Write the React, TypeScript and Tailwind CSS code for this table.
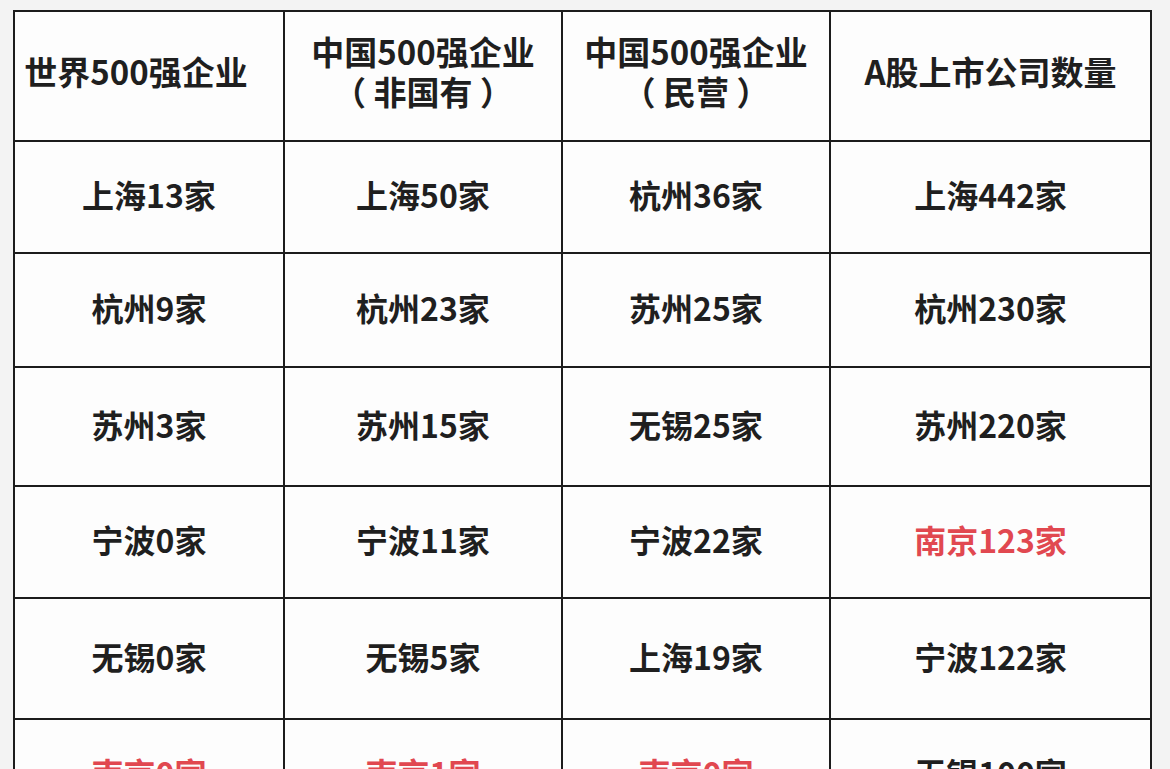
import React from "react";

type Cell = { t: string; red?: boolean };

const header: { lines: string[]; cls: string }[] = [
  { lines: ["世界500强企业"], cls: "pr-[26px] pb-[10px]" },
  { lines: ["中国500强企业", "（ 非国有 ）"], cls: "pb-[10px]" },
  { lines: ["中国500强企业", "（ 民营 ）"], cls: "pb-[10px]" },
  { lines: ["A股上市公司数量"], cls: "pb-[10px]" },
];

const rows: Cell[][] = [
  [{ t: "上海13家" }, { t: "上海50家" }, { t: "杭州36家" }, { t: "上海442家" }],
  [{ t: "杭州9家" }, { t: "杭州23家" }, { t: "苏州25家" }, { t: "杭州230家" }],
  [{ t: "苏州3家" }, { t: "苏州15家" }, { t: "无锡25家" }, { t: "苏州220家" }],
  [{ t: "宁波0家" }, { t: "宁波11家" }, { t: "宁波22家" }, { t: "南京123家", red: true }],
  [{ t: "无锡0家" }, { t: "无锡5家" }, { t: "上海19家" }, { t: "宁波122家" }],
  [{ t: "南京0家", red: true }, { t: "南京1家", red: true }, { t: "南京0家", red: true }, { t: "无锡100家" }],
];

const rowHeights = ["h-[110px]", "h-[112px]", "h-[117px]", "h-[110px]", "h-[119px]", "h-[110px]"];

export default function App() {
  return (
    <div
      className="w-[1170px] h-[769px] overflow-hidden bg-[#f3f3f3]"
      style={{ fontFamily: '"Noto Sans CJK SC", "Noto Sans", sans-serif' }}
    >
      <div className="ml-[13px] mt-[10px] w-[1139px] grid grid-cols-[268px_276px_266px_319px] gap-[2px] p-[2px] bg-[#1c1c1c]">
        {header.map((h, i) => (
          <div
            key={i}
            className={`h-[128px] bg-[#fdfdfd] flex flex-col items-center justify-center text-[33px] font-bold leading-[40px] text-[#1f1f1f] ${h.cls}`}
          >
            {h.lines.map((l, j) => (
              <span key={j} className="whitespace-pre">
                {l}
              </span>
            ))}
          </div>
        ))}
        {rows.map((r, ri) =>
          r.map((c, ci) => (
            <div
              key={ri + "-" + ci}
              className={`${rowHeights[ri]} bg-[#fdfdfd] flex items-center justify-center pb-[6px] text-[32px] font-bold ${
                c.red ? "text-[#e14850]" : "text-[#1f1f1f]"
              }`}
            >
              {c.t}
            </div>
          ))
        )}
      </div>
    </div>
  );
}
